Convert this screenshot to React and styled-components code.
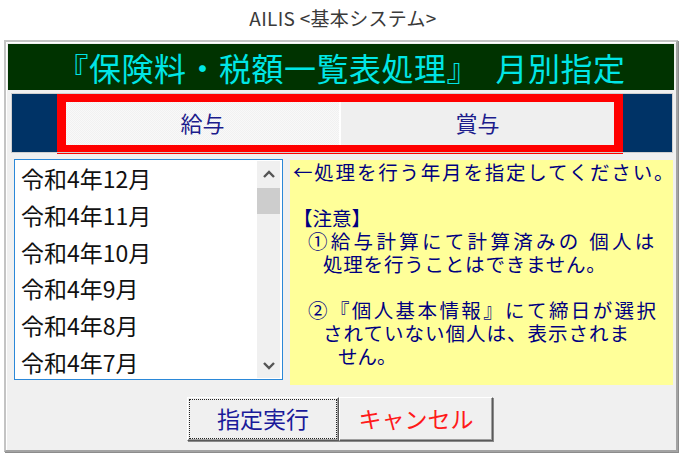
import React from 'react';
import styled, { createGlobalStyle } from 'styled-components';

const GlobalStyle = createGlobalStyle`
  html, body {
    margin: 0;
    padding: 0;
    background: #ffffff;
  }
  body {
    font-family: "Noto Sans CJK JP", "Noto Sans", sans-serif;
  }
`;

const Page = styled.div`
  width: 686px;
  height: 460px;
  overflow: hidden;
`;

const WindowTitle = styled.div`
  height: 40px;
  display: flex;
  align-items: center;
  justify-content: center;
  font-size: 19px;
  letter-spacing: 0.3px;
  color: #3a3a3a;
  padding-bottom: 6px;
  box-sizing: border-box;
`;

const Dialog = styled.div`
  margin-left: 4px;
  width: 674px;
  height: 412px;
  box-sizing: border-box;
  background: #f0f0f0;
  border: 2px solid #a3a3a3;
  border-top-color: #c4c4c4;
  border-left-color: #c4c4c4;
  box-shadow: 1px 1px 0 #8c8c8c, inset 1px 1px 0 #ffffff;
  padding: 2px 2px 0 2px;
  display: flex;
  flex-direction: column;
`;

const Header = styled.div`
  height: 46px;
  background: #003300;
  color: #00e6e6;
  font-size: 32px;
  letter-spacing: 0.5px;
  display: flex;
  align-items: center;
  justify-content: center;
  white-space: pre;
`;

const TabBand = styled.div`
  margin: 4px 2px 0 4px;
  height: 58px;
  background: #003366;
  outline: 1px solid #d0d0d0;
  display: flex;
  padding: 0 49px 0 45px;
`;

const TabGroup = styled.div`
  flex: 1;
  margin: -1px 0 -2px;
  border: 9px solid #ff0000;
  display: flex;
`;

const Tab = styled.div`
  flex: 1;
  display: flex;
  align-items: center;
  justify-content: center;
  font-size: 22px;
  color: #1c1c8c;
  padding-bottom: 3px;
  background: ${p => (p.$pressed ? '#f7f7f7' : '#efefef')};
  background-image: ${p =>
    p.$pressed
      ? 'repeating-conic-gradient(#f9f9f9 0 25%, #f1f1f1 0 50%)'
      : 'none'};
  background-size: 2px 2px;
  border-right: ${p => (p.$pressed ? '2px solid #ffffff' : 'none')};
`;

const Body = styled.div`
  display: flex;
  gap: 7px;
  margin: 7px 0 0 6px;
  height: 226px;
`;

const ListBox = styled.div`
  width: 269px;
  height: 221px;
  box-sizing: border-box;
  border: 1px solid #2b88d8;
  background: #ffffff;
  display: flex;
  padding: 1px 2px 1px 0;
`;

const Items = styled.div`
  flex: 1;
  overflow: hidden;
`;

const Item = styled.div`
  height: 36.8px;
  line-height: 34px;
  padding-left: 6px;
  font-size: 23px;
  color: #111111;
  white-space: nowrap;
`;

const ScrollBar = styled.div`
  width: 23px;
  background: #f0f0f0;
  display: flex;
  flex-direction: column;
`;

const ScrollArrow = styled.div`
  height: 25px;
  display: flex;
  align-items: center;
  justify-content: center;
`;

const ScrollTrack = styled.div`
  flex: 1;
  padding-top: 2px;
`;

const Thumb = styled.div`
  height: 26px;
  background: #cdcdcd;
`;

const Notice = styled.div`
  width: 383px;
  height: 225px;
  margin-top: 1px;
  box-sizing: border-box;
  background: #ffff99;
  color: #000080;
  padding: 0 0 0 3px;
  font-size: 19.5px;
`;

const NoticeLine = styled.div`
  height: 23px;
  line-height: 23px;
  padding-left: ${p => p.$indent || 0}px;
  letter-spacing: ${p => p.$spread}px;
  white-space: nowrap;
`;

const ButtonRow = styled.div`
  display: flex;
  justify-content: center;
  margin-top: 12px;
  padding-right: 2px;
`;

const Button = styled.button`
  width: ${p => p.$width}px;
  height: 44px;
  box-sizing: border-box;
  background: #f0f0f0;
  border: 1px solid;
  border-color: #ffffff #5a5a5a #5a5a5a #ffffff;
  box-shadow: 1px 1px 0 #8a8a8a, inset -1px -1px 0 #a0a0a0;
  font-family: "Noto Sans CJK JP", sans-serif;
  font-size: 23px;
  color: ${p => p.$color};
  padding: 0 0 2px;
  outline: ${p => (p.$focused ? '1px dotted #222' : 'none')};
  outline-offset: -3px;
`;

const Chevron = ({ up }) => (
  <svg width="12" height="8" viewBox="0 0 12 8">
    <polyline
      points={up ? '1,7 6,2 11,7' : '1,1 6,6 11,1'}
      fill="none"
      stroke="#555"
      strokeWidth="2.4"
    />
  </svg>
);

const months = ['令和4年12月', '令和4年11月', '令和4年10月', '令和4年9月', '令和4年8月', '令和4年7月'];

const lines = [
  { text: '←処理を行う年月を指定してください。', indent: 0, spread: 1.8 },
  { text: '', indent: 0, spread: 0 },
  { text: '【注意】', indent: 0, spread: 0 },
  { text: '①給与計算にて計算済みの 個人は', indent: 15, spread: 3.3 },
  { text: '処理を行うことはできません。', indent: 30, spread: 0.8 },
  { text: '', indent: 0, spread: 0 },
  { text: '②『個人基本情報』にて締日が選択', indent: 15, spread: 2.4 },
  { text: 'されていない個人は、表示されま', indent: 30, spread: 1 },
  { text: 'せん。', indent: 45, spread: 0 },
];

const App = () => {
  return (
    <Page>
      <GlobalStyle />
      <WindowTitle>AILIS &lt;基本システム&gt;</WindowTitle>
      <Dialog>
        <Header>『保険料・税額一覧表処理』　月別指定</Header>
        <TabBand>
          <TabGroup>
            <Tab $pressed>給与</Tab>
            <Tab>賞与</Tab>
          </TabGroup>
        </TabBand>
        <Body>
          <ListBox>
            <Items>
              {months.map(m => (
                <Item key={m}>{m}</Item>
              ))}
            </Items>
            <ScrollBar>
              <ScrollArrow>
                <Chevron up />
              </ScrollArrow>
              <ScrollTrack>
                <Thumb />
              </ScrollTrack>
              <ScrollArrow>
                <Chevron />
              </ScrollArrow>
            </ScrollBar>
          </ListBox>
          <Notice>
            {lines.map((l, i) => (
              <NoticeLine key={i} $indent={l.indent} $spread={l.spread}>
                {l.text}
              </NoticeLine>
            ))}
          </Notice>
        </Body>
        <ButtonRow>
          <Button $width={152} $color="#1a1a9a" $focused>指定実行</Button>
          <Button $width={154} $color="#ff1a1a">キャンセル</Button>
        </ButtonRow>
      </Dialog>
    </Page>
  );
};

export default App;
